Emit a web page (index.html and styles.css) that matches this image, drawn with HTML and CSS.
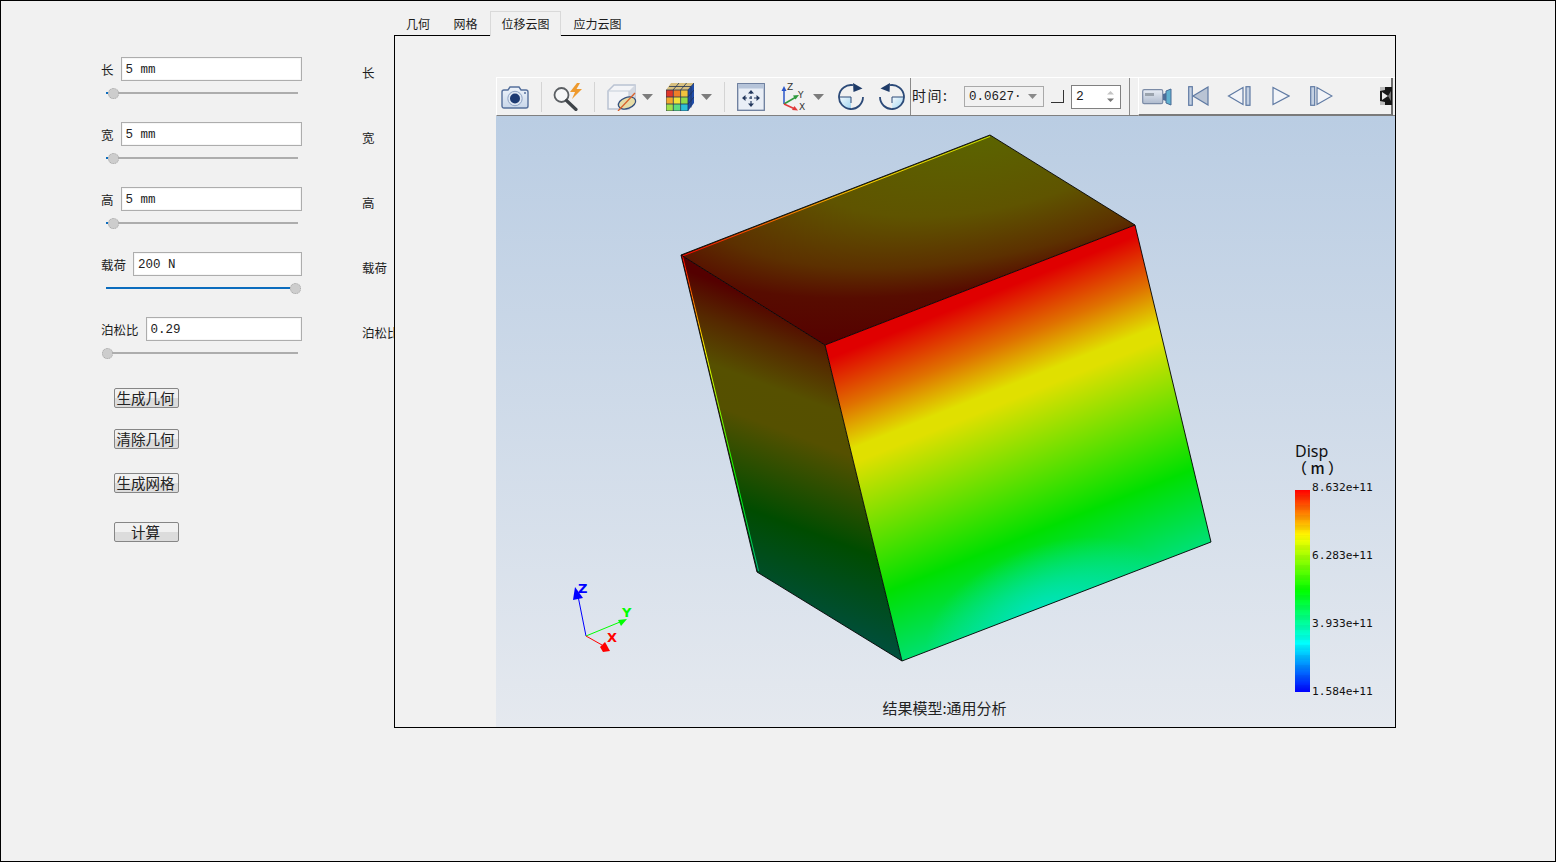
FILE: index.html
```html
<!DOCTYPE html>
<html lang="zh-CN">
<head>
<meta charset="utf-8">
<title>位移云图</title>
<link rel="stylesheet" href="styles.css">
</head>
<body>
<div class="window">
  <section class="form">
    <div class="group">
      <div class="row"><label class="lbl">长</label><div class="field">5 mm</div></div>
      <div class="slider"><i class="fill fill-min"></i><i class="knob"></i><i class="rest"></i></div>
    </div>
    <div class="group">
      <div class="row"><label class="lbl">宽</label><div class="field">5 mm</div></div>
      <div class="slider"><i class="fill fill-min"></i><i class="knob"></i><i class="rest"></i></div>
    </div>
    <div class="group">
      <div class="row"><label class="lbl">高</label><div class="field">5 mm</div></div>
      <div class="slider"><i class="fill fill-min"></i><i class="knob"></i><i class="rest"></i></div>
    </div>
    <div class="group">
      <div class="row"><label class="lbl">载荷</label><div class="field">200 N</div></div>
      <div class="slider"><i class="fill fill-max"></i><i class="knob"></i></div>
    </div>
    <div class="group">
      <div class="row"><label class="lbl">泊松比</label><div class="field">0.29</div></div>
      <div class="slider slider-wide"><i class="knob"></i><i class="rest"></i></div>
    </div>
    <div class="actions">
      <button class="btn btn-a">生成几何</button>
      <button class="btn btn-b">清除几何</button>
      <button class="btn btn-c">生成网格</button>
      <button class="btn btn-d">计算</button>
    </div>
  </section>

  <aside class="mirror">
    <div>长</div><div>宽</div><div>高</div><div>载荷</div><div>泊松比</div>
  </aside>

  <section class="stage">
    <nav class="tabs">
      <span class="tab tab-1">几何</span>
      <span class="tab tab-2">网格</span>
      <span class="tab tab-3 active">位移云图</span>
      <span class="tab tab-4">应力云图</span>
    </nav>
    <div class="frame">
      <div class="toolbar">
        <svg class="ic i-cam" viewBox="0 0 28 24">
          <defs><linearGradient id="camb" x1="0" y1="0" x2="0" y2="1"><stop offset="0" stop-color="#eef3fa"/><stop offset="1" stop-color="#c9d7ea"/></linearGradient></defs>
          <path d="M3 5h4l2-3h9l2 3h5a2 2 0 0 1 2 2v14a2 2 0 0 1-2 2H3a2 2 0 0 1-2-2V7a2 2 0 0 1 2-2z" fill="url(#camb)" stroke="#56709c" stroke-width="1.4"/>
          <circle cx="14" cy="13.5" r="7.2" fill="#dfe7f3" stroke="#8fa3c4"/>
          <circle cx="14" cy="13.5" r="5" fill="#1d3a72"/>
          <circle cx="24" cy="8" r="1" fill="#56709c"/>
        </svg>
        <i class="sep sep-1"></i>
        <svg class="ic i-search" viewBox="0 0 30 28">
          <circle cx="8.5" cy="12" r="7" fill="#f6f7f8" stroke="#5b5f63" stroke-width="1.8"/>
          <path d="M13.5 17.5 23 26.5" stroke="#3f4449" stroke-width="3.2" stroke-linecap="round"/>
          <path d="M24 0 17 9h5l-3 7 10-10h-5.500l3.500-6z" fill="#ee9a2e"/>
        </svg>
        <i class="sep sep-2"></i>
        <svg class="ic i-cube" viewBox="0 0 30 28">
          <path d="M1 8 7 2h21v17l-6 7H1z" fill="#f3f4f7" stroke="#b9c2d2" stroke-width="1.5"/>
          <path d="M22 8 28 2v17l-6 7z" fill="#d3d8e1"/>
          <path d="M1 8h21v18" fill="none" stroke="#c6cdd9" stroke-width="1.2"/>
          <ellipse cx="20" cy="20" rx="9" ry="5.500" transform="rotate(-20 20 20)" fill="#e6dca6" stroke="#35507e" stroke-width="1.3"/>
          <path d="M11 28 28 10" stroke="#d9602a" stroke-width="1.3"/>
        </svg>
        <svg class="ic i-arrow i-a1" viewBox="0 0 11 6"><path d="M0 0h11L5.500 6z" fill="#7c7c7c"/></svg>
        <svg class="ic i-grid" viewBox="0 0 28 28">
          <path d="M5 0h23l-6 7H0z" fill="#d8c080"/>
          <path d="M22 7l6-7v20l-6 8z" fill="#1f4ca8"/>
          <rect x="0" y="7" width="7.300" height="7" fill="#e0362a"/><rect x="7.300" y="7" width="7.300" height="7" fill="#ef7f28"/><rect x="14.600" y="7" width="7.400" height="7" fill="#f2c23e"/>
          <rect x="0" y="14" width="7.300" height="7" fill="#f2a82e"/><rect x="7.300" y="14" width="7.300" height="7" fill="#f0e23a"/><rect x="14.600" y="14" width="7.400" height="7" fill="#8fdc4a"/>
          <rect x="0" y="21" width="7.300" height="7" fill="#9fe04a"/><rect x="7.300" y="21" width="7.300" height="7" fill="#5cdc80"/><rect x="14.600" y="21" width="7.400" height="7" fill="#2cc0d8"/>
          <path d="M0 7h22v21H0zM7.300 7v21M14.600 7v21M0 14h22M0 21h22M22 7l6-7M7 7l6-7M14.600 7l6-7M3 3.500h22M25 3.500v21M22 14l6-7M22 21l6-7" fill="none" stroke="#223354" stroke-width=".8"/>
        </svg>
        <svg class="ic i-arrow i-a2" viewBox="0 0 11 6"><path d="M0 0h11L5.500 6z" fill="#7c7c7c"/></svg>
        <i class="sep sep-3"></i>
        <svg class="ic i-move" viewBox="0 0 28 28">
          <rect x=".7" y=".7" width="26.600" height="26.600" fill="#e9eef6" stroke="#6a7c9c" stroke-width="1.3"/>
          <rect x="1" y="1" width="26" height="4.500" fill="#b6c4d9"/>
          <path d="M14 8v14M7 15h14" stroke="#2c4166" stroke-width="1.2" stroke-dasharray="3 2"/>
          <path d="M14 7l-3 3.500h6zM14 24l-3-3.500h6zM5 15l3.500-3v6zM23 15l-3.500-3v6z" fill="#23375c"/>
        </svg>
        <svg class="ic i-axes" viewBox="0 0 25 28">
          <path d="M3 21V6" stroke="#2a55c8" stroke-width="1.5"/><path d="M3 3 .5 8h5z" fill="#2a55c8"/>
          <path d="M3 21 15 14" stroke="#2f9a3c" stroke-width="1.5"/><path d="M18 12l-6 .5 2.500 4z" fill="#2f9a3c"/>
          <path d="M3 21 14 26" stroke="#e23a3a" stroke-width="1.5"/><path d="M17 27.500l-6-.5 2.500-4z" fill="#e23a3a"/>
          <text x="6" y="7" class="ax-t">Z</text><text x="17" y="14.500" class="ax-t">Y</text><text x="18" y="26.500" class="ax-t">X</text>
        </svg>
        <svg class="ic i-arrow i-a3" viewBox="0 0 11 6"><path d="M0 0h11L5.500 6z" fill="#7c7c7c"/></svg>
        <svg class="ic i-rot" viewBox="0 1 26 28">
          <defs><linearGradient id="rotf" x1="0" y1="0" x2="1" y2="1"><stop offset="0" stop-color="#f4fafe"/><stop offset="1" stop-color="#9fd4f0"/></linearGradient></defs>
          <path d="M1 15H13V27A12 12 0 0 1 1 15z" fill="url(#rotf)"/>
          <path d="M1 15H13V21" fill="none" stroke="#2c4a78" stroke-width="1"/>
          <path d="M25 15A12 12 0 1 1 15 3.200" fill="none" stroke="#2c4a78" stroke-width="1.800"/>
          <path d="M15 1l9.500 5.500L15.500 10z" fill="#1f3b68"/>
        </svg>
        <svg class="ic i-rot i-rot2" viewBox="0 1 26 28">
          <path d="M25 15H13V27A12 12 0 0 0 25 15z" fill="url(#rotf)"/>
          <path d="M25 15H13V21" fill="none" stroke="#2c4a78" stroke-width="1"/>
          <path d="M1 15A12 12 0 1 0 11 3.200" fill="none" stroke="#2c4a78" stroke-width="1.800"/>
          <path d="M11 1 1.500 6.500 10.500 10z" fill="#1f3b68"/>
        </svg>
        <i class="div div-1"></i>
        <span class="time-lbl">时间:</span>
        <div class="combo"><span>0.0627·</span><svg class="combo-arrow" viewBox="0 0 9 5"><path d="M0 0h9L4.500 5z" fill="#8a8a8a"/></svg></div>
        <i class="check"></i>
        <div class="spin"><span>2</span><svg class="spin-arrows" viewBox="0 0 7 11"><path d="M3.500 0 7 3.500H0z" fill="#c4c4c4"/><path d="M3.500 11 7 7.500H0z" fill="#777"/></svg></div>
        <i class="div div-2"></i>
        <div class="play">
          <svg class="ic i-video" viewBox="0 0 30 19">
            <defs><linearGradient id="vidb" x1="0" y1="0" x2="0" y2="1"><stop offset="0" stop-color="#e8edf5"/><stop offset="1" stop-color="#aebacd"/></linearGradient></defs>
            <rect x=".7" y="2.700" width="20" height="14" rx="1.500" fill="url(#vidb)" stroke="#7b8ba6" stroke-width="1.200"/>
            <rect x="3" y="6" width="9" height="3" fill="#9aa3ad"/>
            <path d="M21 7l3-1v8l-3-1z" fill="#4f6f99"/>
            <path d="M24 4l5-2v16l-5-2z" fill="#5fb0cf" stroke="#4a6a94" stroke-width="1"/>
          </svg>
          <svg class="ic i-first" viewBox="0 0 21 20"><rect x=".7" y=".7" width="3.600" height="18.600" fill="#c3d0e2" stroke="#5f7aa3" stroke-width="1.200"/><path d="M20 1v18L5 10z" fill="#b9c4d4" stroke="#5f7aa3" stroke-width="1.200"/></svg>
          <svg class="ic i-prev" viewBox="0 0 24 20"><path d="M16 1.500v17L1.500 10z" fill="#f2f4f8" stroke="#5f7aa3" stroke-width="1.200"/><rect x="19" y=".7" width="4" height="18.600" fill="#c3d0e2" stroke="#5f7aa3" stroke-width="1.200"/></svg>
          <svg class="ic i-play" viewBox="0 0 18 20"><path d="M1 1.500v17L17 10z" fill="#f2f4f8" stroke="#5f7aa3" stroke-width="1.200"/></svg>
          <svg class="ic i-next" viewBox="0 0 23 20"><rect x=".7" y=".7" width="4" height="18.600" fill="#c3d0e2" stroke="#5f7aa3" stroke-width="1.200"/><path d="M7 1.500v17L22 10z" fill="#f2f4f8" stroke="#5f7aa3" stroke-width="1.200"/></svg>
          <svg class="ic i-end" viewBox="0 0 12 18"><rect width="12" height="18" fill="#161616"/><path d="M0 0h5v3L0 4zM0 14l5 1v3H0z" fill="#bdbdbd"/><path d="M2 5l6 4-6 4z" fill="#e8e8e8"/><path d="M11 4 8 9l3 5z" fill="#777"/></svg>
        </div>
      </div>

      <div class="viewport">
        <svg class="scene" viewBox="496 116 899 611">
          <defs>
            <linearGradient id="fr" gradientUnits="userSpaceOnUse" x1="229" y1="577" x2="359" y2="902">
              <stop offset=".057" stop-color="#e00000"/><stop offset=".2" stop-color="#e07000"/><stop offset=".32" stop-color="#e0e000"/><stop offset=".36" stop-color="#e0e000"/><stop offset=".737" stop-color="#00e000"/><stop offset=".94" stop-color="#00e070"/><stop offset="1" stop-color="#00e090"/>
            </linearGradient>
            <radialGradient id="fc" gradientUnits="userSpaceOnUse" cx="1045" cy="615" r="125" gradientTransform="translate(1045 615) rotate(-21) scale(1 .55) translate(-1045 -615)">
              <stop offset="0" stop-color="#00e4c0"/><stop offset="1" stop-color="#00e4c0" stop-opacity="0"/>
            </radialGradient>
            <radialGradient id="ft" gradientUnits="userSpaceOnUse" cx="0" cy="0" r="1" gradientTransform="matrix(-421 164 217 134 990 135)">
              <stop offset="0" stop-color="#5b6400"/><stop offset=".385" stop-color="#5f5400"/><stop offset=".63" stop-color="#5c3000"/><stop offset=".77" stop-color="#570c00"/><stop offset="1" stop-color="#560000"/>
            </radialGradient>
            <linearGradient id="fl" gradientUnits="userSpaceOnUse" x1="777" y1="304" x2="670" y2="591">
              <stop offset="0" stop-color="#540000"/><stop offset=".12" stop-color="#552800"/><stop offset=".26" stop-color="#565000"/><stop offset=".38" stop-color="#555000"/><stop offset=".66" stop-color="#004c00"/><stop offset="1" stop-color="#004f48"/>
            </linearGradient>
            <linearGradient id="el" gradientUnits="userSpaceOnUse" x1="681" y1="255" x2="757" y2="572">
              <stop offset="0" stop-color="#ff0000"/><stop offset=".3" stop-color="#ffff00"/><stop offset=".7" stop-color="#00ff00"/><stop offset="1" stop-color="#00c080"/>
            </linearGradient>
            <linearGradient id="et" gradientUnits="userSpaceOnUse" x1="681" y1="255" x2="990" y2="135">
              <stop offset="0" stop-color="#ff0000"/><stop offset=".6" stop-color="#ffd000"/><stop offset="1" stop-color="#c8e000"/>
            </linearGradient>
          </defs>
          <polygon points="681,255 990,135 1135,225 825,345" fill="url(#ft)"/>
          <polygon points="681,255 825,345 902,661 757,572" fill="url(#fl)"/>
          <polygon points="825,345 1135,225 1211,542 902,661" fill="url(#fr)"/>
          <polygon points="825,345 1135,225 1211,542 902,661" fill="url(#fc)"/>
          <path d="M682.500 256 990 136.500" fill="none" stroke="url(#et)" stroke-width="1"/>
          <path d="M682.500 256 758.500 571" fill="none" stroke="url(#el)" stroke-width="1"/>
          <path d="M681 255 990 135 1135 225 1211 542 902 661 757 572zM681 255 825 345 1135 225M825 345 902 661" fill="none" stroke="#000" stroke-width=".9"/>

          <path d="M586 636 578 596" stroke="#0000ff" stroke-width="1"/>
          <path d="M575 587 573 600 583 598z" fill="#0000ff"/>
          <path d="M586 636 620 622" stroke="#00ff00" stroke-width="1"/>
          <path d="M627 619 618 620 621 626z" fill="#00ff00"/>
          <path d="M586 636 602 645" stroke="#ff0000" stroke-width="1"/>
          <path d="M605 642 600 647 603 652 610 651z" fill="#ff0000"/>
          <text x="578" y="593" class="tri tri-z">Z</text>
          <text x="622" y="617" class="tri tri-y">Y</text>
          <text x="607" y="642" class="tri tri-x">X</text>
        </svg>

        <div class="legend">
          <div class="leg-title">
            <div class="leg-name">Disp</div>
            <div class="leg-unit">（ m ）</div>
          </div>
          <div class="leg-body">
            <div class="leg-bar"></div>
            <div class="leg-vals"><span>8.632e+11</span><span>6.283e+11</span><span>3.933e+11</span><span>1.584e+11</span></div>
          </div>
        </div>
        <div class="caption">结果模型:通用分析</div>
      </div>
    </div>
  </section>
</div>
</body>
</html>
```

FILE: styles.css
```css
* { box-sizing: border-box; }
html, body { margin: 0; padding: 0; }
body { font-family: "Noto Sans CJK SC", "Liberation Sans", sans-serif; color: #1c1c1c; background: #f1f1f1; overflow: hidden; }
i { display: block; font-style: normal; }

.window { width: 1556px; height: 862px; border: 1px solid #000; background: #f1f1f1; display: flex; align-items: flex-start; }

/* left form */
.form { flex: 0 0 361px; padding: 56px 0 0 100px; }
.group { height: 65px; width: 201px; }
.row { display: flex; align-items: center; height: 24px; }
.lbl { font-size: 12.5px; line-height: 24px; white-space: nowrap; margin-right: 7px; padding-top: 2px; }
.field { flex: 1; height: 24px; border: 1px solid #adadad; background: #fff; box-shadow: inset 0 0 0 1px #f6f6f6; font: 12.5px/19px "Liberation Mono", "DejaVu Sans Mono", monospace; padding: 3px 0 0 4px; color: #222; }
.slider { display: flex; align-items: center; height: 10px; width: 192px; margin: 7px 0 0 5px; }
.slider-wide { width: 196px; margin-left: 1px; }
.fill { height: 2px; background: #0b6cbd; flex: none; }
.fill-min { width: 2px; }
.fill-max { width: 184px; }
.knob { width: 11px; height: 11px; flex: none; border-radius: 50%; background: #cdcdcd; border: 1px dotted #a8a8a8; margin-right: -1px; }
.rest { flex: 1; height: 2px; background: #adadad; }

.actions { display: flex; flex-direction: column; align-items: flex-start; padding-left: 13px; }
.btn { width: 65px; height: 20px; padding: 0 2px 0 0; border: 1px solid #868686; border-radius: 2px; background: linear-gradient(#f1f1f1 0 52%, #dcdcdc 52% 100%); font: 14.5px/18px "Noto Sans CJK SC", sans-serif; color: #222; overflow: hidden; }
.btn-a { margin-top: 6px; }
.btn-b { margin-top: 21px; }
.btn-c { margin-top: 24px; }
.btn-d { margin-top: 29px; }

/* duplicated labels */
.mirror { flex: 0 0 32px; padding-top: 39px; overflow: hidden; font-size: 12.5px; }
.mirror div { height: 65px; line-height: 65px; white-space: nowrap; }

/* tabs */
.stage { flex: 0 0 1002px; margin-top: 10px; }
.tabs { display: flex; height: 24px; font-size: 12px; }
.tab { height: 24px; line-height: 25px; text-align: center; position: relative; }
.tab-1 { width: 47px; padding-left: 1px; }
.tab-2 { width: 49px; }
.tab-3 { width: 71px; }
.tab-4 { width: 73px; }
.active { height: 25px; border: 1px solid #d9d9d9; border-bottom: 0; background: #f1f1f1; line-height: 24px; z-index: 2; }

.frame { height: 693px; border: 1px solid #000; padding: 41px 0 0 101px; background: #f1f1f1; }

/* toolbar */
.toolbar { height: 39px; display: flex; align-items: center; background: #f1f1f1; border-top: 1px solid #fff; border-left: 1px solid #fff; border-bottom: 1px solid #808080; position: relative; }
.ic { display: block; flex: none; }
.i-cam { width: 28px; height: 24px; margin-left: 4px; }
.sep { width: 1px; height: 30px; background: #d4d4d4; flex: none; }
.sep-1 { margin-left: 12px; }
.sep-2 { margin-left: 11px; }
.sep-3 { margin-left: 12px; }
.i-search { width: 30px; height: 28px; margin-left: 11px; }
.i-cube { width: 30px; height: 28px; margin-left: 12px; }
.i-arrow { width: 11px; height: 6px; }
.i-a1 { margin-left: 5px; }
.i-grid { width: 28px; height: 28px; margin-left: 13px; }
.i-a2 { margin-left: 7px; }
.i-move { width: 28px; height: 28px; margin-left: 12px; }
.i-axes { width: 25px; height: 28px; margin-left: 16px; }
.ax-t { font: 9px "DejaVu Sans", sans-serif; fill: #333; }
.i-a3 { margin-left: 7px; }
.i-rot { width: 26px; height: 28px; margin-left: 14px; }
.i-rot2 { margin-left: 15px; }
.div { width: 1px; height: 37px; background: #8a8a8a; flex: none; }
.div-1 { margin-left: 5px; }
.div-2 { margin-left: 8px; }
.time-lbl { flex: none; width: 38px; margin: 0 0 3px 1px; font-size: 14px; letter-spacing: 1.500px; white-space: nowrap; line-height: 20px; }
.combo { flex: none; width: 80px; height: 21px; margin-left: 14px; border: 1px solid #a9a9a9; display: flex; align-items: center; justify-content: space-between; padding: 0 6px 0 4px; font: 12.5px/19px "Liberation Mono", monospace; }
.combo span { white-space: nowrap; width: 52px; overflow: hidden; padding-top: 2px; }
.combo-arrow { width: 9px; height: 5px; }
.check { flex: none; width: 13px; height: 13px; margin-left: 7px; border-right: 1px solid #333; border-bottom: 1px solid #333; }
.spin { flex: none; width: 50px; height: 24px; margin-left: 7px; border: 1px solid #808080; background: #fff; display: flex; align-items: center; justify-content: space-between; padding: 0 6px 0 4px; font: 13px/22px "Liberation Mono", monospace; }
.spin-arrows { width: 7px; height: 11px; }
.play { flex: none; width: 255px; height: 38px; margin-left: 8px; margin-bottom: -1px; display: flex; align-items: center; border-left: 1px solid #fff; border-right: 2px solid #6e6e6e; border-bottom: 2px solid #7a7a7a; }
.i-video { width: 30px; height: 19px; margin-left: 3px; }
.i-first { width: 21px; height: 20px; margin-left: 16px; }
.i-prev { width: 24px; height: 20px; margin-left: 18px; }
.i-play { width: 18px; height: 20px; margin-left: 21px; }
.i-next { width: 23px; height: 20px; margin-left: 20px; }
.i-end { width: 12px; height: 18px; margin-left: 47px; }

/* 3D viewport: a free canvas */
.viewport { height: 611px; width: 899px; position: relative; background: linear-gradient(#bacde3, #e5e9ef); overflow: hidden; }
.scene { position: absolute; left: 0; top: 0; width: 899px; height: 611px; display: block; }
.tri { font: bold 13px "DejaVu Sans", sans-serif; }
.tri-z { fill: #0000ff; }
.tri-y { fill: #00ff00; }
.tri-x { fill: #ff0000; }

.legend { position: absolute; left: 799px; top: 327px; }
.leg-title { height: 47px; color: #111; }
.leg-name { font: 16px/16px "Noto Sans", "Open Sans", sans-serif; }
.leg-unit { font: 500 15px/17px "Noto Sans CJK SC", sans-serif; margin-left: -3px; width: 44px; white-space: nowrap; }
.leg-body { display: flex; }
.leg-bar { width: 15px; height: 202px; background: repeating-linear-gradient(rgba(0,0,0,0) 0 5px, rgba(0,0,0,.035) 5px 10px), linear-gradient(#ff0000, #ffff00 23%, #00ff00 50%, #00ffff 76%, #0000ff); }
.leg-vals { margin: -10px 0 0 2px; height: 220px; display: flex; flex-direction: column; justify-content: space-between; font: 11.2px/16px "DejaVu Sans Mono", monospace; color: #111; }

.caption { position: absolute; left: 0; right: 0; bottom: 9px; padding-right: 2px; text-align: center; font-size: 15px; line-height: 20px; color: #222; }
```
